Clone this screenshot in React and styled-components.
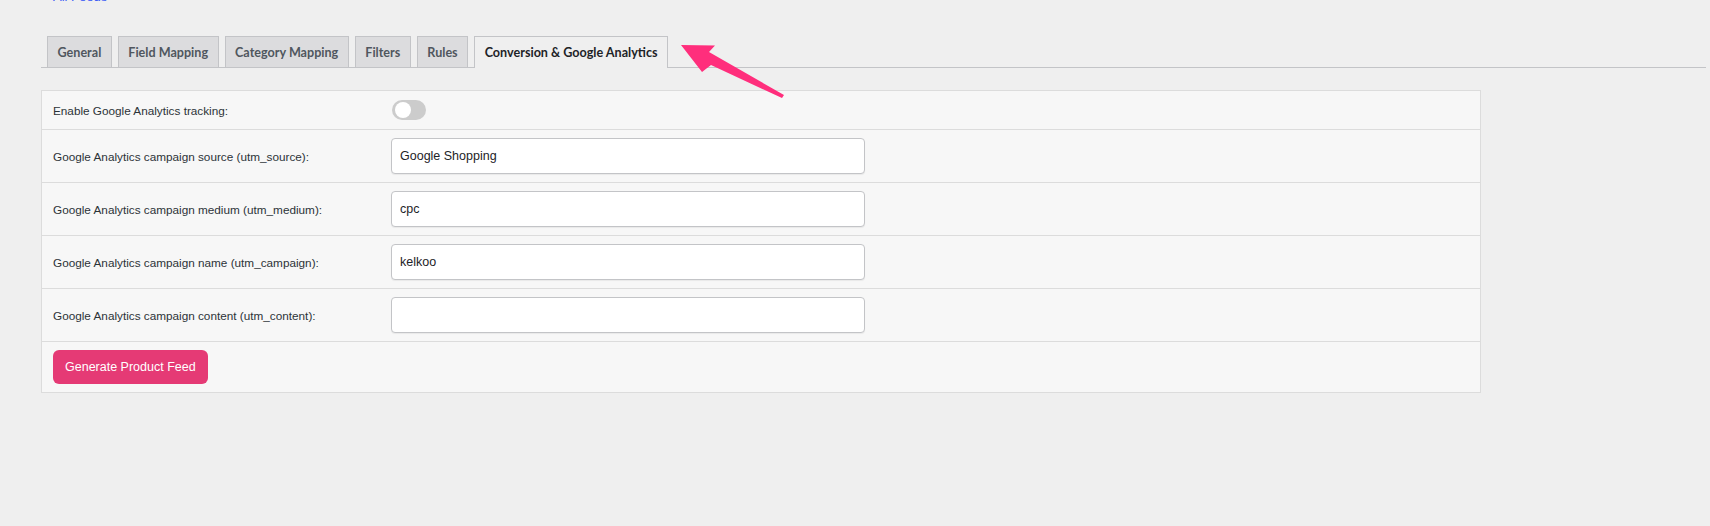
import React from "react";
import styled, { createGlobalStyle } from "styled-components";

const Global = createGlobalStyle`
  html, body { margin: 0; padding: 0; background: #efefef; }
  body { font-family: Arial, "Liberation Sans", sans-serif; overflow: hidden; }
  * { box-sizing: border-box; }
`;

const Page = styled.div`
  position: relative;
  padding: 0 4px 40px 41px;
  min-height: 526px;
`;

const TopLink = styled.a`
  display: block;
  margin: -10px 0 0 12px;
  height: 13px;
  line-height: 13px;
  font-size: 13px;
  color: #3c5cf5;
  text-decoration: none;
`;

const Nav = styled.div`
  display: flex;
  margin-top: 33px;
  border-bottom: 1px solid #c3c4c7;
  height: 32px;
`;

const Tab = styled.div`
  margin-left: 6px;
  height: ${(p) => (p.$active ? "32px" : "31px")};
  padding: 0 9.5px;
  display: flex;
  align-items: center;
  border: 1px solid #c3c4c7;
  border-bottom: none;
  background: ${(p) => (p.$active ? "#efefef" : "#dcdcde")};
  color: ${(p) => (p.$active ? "#1d2327" : "#50575e")};
  font-family: Lato, "Open Sans", sans-serif;
  font-weight: 700;
  font-size: 12.6px;
  white-space: nowrap;
  position: relative;
  z-index: ${(p) => (p.$active ? 1 : 0)};
`;

const Table = styled.div`
  margin-top: 22px;
  width: 1440px;
  border: 1px solid #dcdcdc;
  background: #f7f7f7;
`;

const Row = styled.div`
  display: grid;
  grid-template-columns: 338px 1fr;
  align-items: center;
  & + & { border-top: 1px solid #dcdcdc; }
`;

const Label = styled.div`
  padding: 8px 11px;
  font-size: 11.75px;
  color: #2c3338;
`;

const Field = styled.div`
  padding: ${(p) => (p.$tall ? "9px" : "8px")} 11px;
  display: flex;
  align-items: center;
`;

const Input = styled.input`
  width: 474px;
  height: 36px;
  border: 1px solid #c3c4c7;
  border-radius: 4px;
  background: #fff;
  padding: 0 8px;
  font-family: Arial, "Liberation Sans", sans-serif;
  font-size: 12.5px;
  color: #1d2327;
  box-shadow: 0 1px 1px rgba(0,0,0,0.06);
  outline: none;
`;

const Toggle = styled.div`
  width: 34px;
  height: 20px;
  border-radius: 10px;
  background: #cccccc;
  position: relative;
  margin-left: 0.5px;
  &::after {
    content: "";
    position: absolute;
    left: 3px;
    top: 2px;
    width: 16px;
    height: 16px;
    border-radius: 50%;
    background: #fff;
  }
`;

const ButtonCell = styled.div`
  padding: 8px 11px;
`;

const Button = styled.button`
  height: 34px;
  padding: 0 12px;
  border: none;
  border-radius: 6px;
  background: #e53a75;
  color: #fff;
  font-family: Arial, "Liberation Sans", sans-serif;
  font-size: 12.5px;
  cursor: pointer;
`;

const Arrow = styled.svg`
  position: absolute;
  left: 670px;
  top: 45px;
  width: 125px;
  height: 70px;
  overflow: visible;
`;

const tabs = ["General", "Field Mapping", "Category Mapping", "Filters", "Rules", "Conversion & Google Analytics"];

const fields = [
  ["Google Analytics campaign source (utm_source):", "Google Shopping"],
  ["Google Analytics campaign medium (utm_medium):", "cpc"],
  ["Google Analytics campaign name (utm_campaign):", "kelkoo"],
  ["Google Analytics campaign content (utm_content):", ""],
];

export default function App() {
  return (
    <Page>
      <Global />
      <TopLink href="#">All Feeds</TopLink>
      <Nav>
        {tabs.map((t, i) => (
          <Tab key={t} $active={i === tabs.length - 1}>{t}</Tab>
        ))}
      </Nav>
      <Table>
        <Row>
          <Label>Enable Google Analytics tracking:</Label>
          <Field $tall><Toggle /></Field>
        </Row>
        {fields.map(([label, value]) => (
          <Row key={label}>
            <Label>{label}</Label>
            <Field><Input defaultValue={value} /></Field>
          </Row>
        ))}
        <Row>
          <ButtonCell><Button>Generate Product Feed</Button></ButtonCell>
        </Row>
      </Table>
      <Arrow viewBox="0 0 125 70">
        <polygon points="11,10 45,10.5 39,17 114,60 112,63 41,30 32,37" fill="#ff2e7c" />
      </Arrow>
    </Page>
  );
}
